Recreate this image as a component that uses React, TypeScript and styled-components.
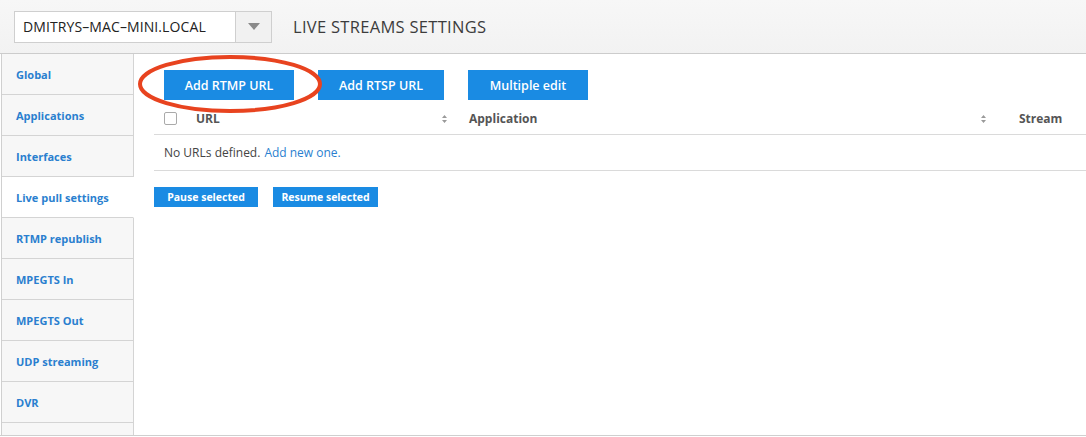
import styled, { createGlobalStyle } from 'styled-components';

const GlobalStyle = createGlobalStyle`
  body {
    margin: 0;
    background: #ffffff;
    font-family: "Open Sans", "DejaVu Sans", sans-serif;
  }
`;

const Page = styled.div`
  width: 1086px;
  height: 435px;
  border-bottom: 1px solid #cfcfcf;
  overflow: hidden;
`;

const Header = styled.div`
  height: 53px;
  display: flex;
  align-items: center;
  padding-left: 14px;
  background: linear-gradient(#f7f7f7, #f2f2f2);
  border-bottom: 1px solid #cccccc;
`;

const Select = styled.div`
  display: flex;
  width: 258px;
  height: 32px;
  box-sizing: border-box;
  border: 1px solid #cfcfcf;
  background: #ffffff;
`;

const SelectValue = styled.div`
  flex: 1;
  display: flex;
  align-items: center;
  padding-left: 8px;
  font-size: 14px;
  color: #222;
  letter-spacing: 0.1px;
`;

const SelectArrow = styled.div`
  width: 35px;
  border-left: 1px solid #cfcfcf;
  background: #f1f1f1;
  display: flex;
  align-items: center;
  justify-content: center;
`;

const Title = styled.div`
  margin-left: 21px;
  font-size: 16.5px;
  color: #3c3c3c;
  letter-spacing: 0.3px;
`;

const Body = styled.div`
  display: flex;
  height: 381px;
`;

const Sidebar = styled.div`
  width: 132px;
  margin-left: 1px;
  border-left: 1px solid #d0d0d0;
  display: flex;
  flex-direction: column;
`;

const NavItem = styled.div<{ $active?: boolean }>`
  height: 40px;
  flex-shrink: 0;
  display: flex;
  align-items: center;
  padding-left: 14px;
  font-size: 11px;
  font-weight: 700;
  color: #2a7fcf;
  background: ${(p) => (p.$active ? '#ffffff' : '#f7f7f7')};
  border-bottom: 1px solid #d4d4d4;
  border-right: 1px solid ${(p) => (p.$active ? 'transparent' : '#d4d4d4')};
`;

const Main = styled.div`
  flex: 1;
  padding: 16px 0 0 20px;
`;

const Toolbar = styled.div`
  display: flex;
  gap: 24px;
  padding-left: 10px;
`;

const ButtonWrap = styled.div`
  position: relative;
`;

const Button = styled.div<{ $w: number }>`
  width: ${(p) => p.$w}px;
  height: 30px;
  background: #1a8be3;
  color: #fff;
  font-size: 12.5px;
  font-weight: 600;
  display: flex;
  align-items: center;
  justify-content: center;
`;

const Ring = styled.svg`
  position: absolute;
  left: -28px;
  top: -17px;
  pointer-events: none;
`;

const Table = styled.div`
  margin-top: 3px;
`;

const HeadRow = styled.div`
  display: grid;
  grid-template-columns: 42px 273px 550px 1fr;
  height: 31px;
  align-items: center;
  border-bottom: 1px solid #dadada;
  font-size: 12px;
  font-weight: 700;
  color: #555;
`;

const HeadCell = styled.div<{ $pr?: number }>`
  display: flex;
  justify-content: space-between;
  align-items: center;
  padding-right: ${(p) => p.$pr ?? 0}px;
`;

const Checkbox = styled.div`
  width: 11px;
  height: 11px;
  margin-left: 10px;
  border: 1px solid #aaa;
  border-radius: 2px;
  background: #fff;
`;

const EmptyRow = styled.div`
  height: 35px;
  display: flex;
  align-items: center;
  padding-left: 10px;
  border-bottom: 1px solid #dadada;
  font-size: 12px;
  color: #444;
`;

const Link = styled.span`
  color: #2a7fcf;
  margin-left: 4px;
`;

const Actions = styled.div`
  display: flex;
  gap: 15px;
  margin-top: 16px;
`;

const SmallButton = styled.div<{ $w: number }>`
  width: ${(p) => p.$w}px;
  height: 20px;
  background: #1a8be3;
  color: #fff;
  font-size: 10.5px;
  font-weight: 700;
  display: flex;
  align-items: center;
  justify-content: center;
`;

const SortIcon = () => (
  <svg width="5" height="8" viewBox="0 0 5 8">
    <path d="M0 3 L2.5 0 L5 3 Z M0 5 L2.5 8 L5 5 Z" fill="#9a9a9a" />
  </svg>
);

const nav = [
  'Global',
  'Applications',
  'Interfaces',
  'Live pull settings',
  'RTMP republish',
  'MPEGTS In',
  'MPEGTS Out',
  'UDP streaming',
  'DVR',
  '',
];

const App = () => {
  return (
    <>
      <GlobalStyle />
      <Page>
        <Header>
          <Select>
            <SelectValue>DMITRYS–MAC–MINI.LOCAL</SelectValue>
            <SelectArrow>
              <svg width="12" height="7" viewBox="0 0 12 7">
                <path d="M0 0 L12 0 L6 7 Z" fill="#8a8a8a" />
              </svg>
            </SelectArrow>
          </Select>
          <Title>LIVE STREAMS SETTINGS</Title>
        </Header>
        <Body>
          <Sidebar>
            {nav.map((n, i) => (
              <NavItem key={i} $active={n === 'Live pull settings'}>
                {n}
              </NavItem>
            ))}
          </Sidebar>
          <Main>
            <Toolbar>
              <ButtonWrap>
                <Button $w={130}>Add RTMP URL</Button>
                <Ring width="188" height="62" viewBox="0 0 188 62">
                  <ellipse cx="94" cy="31" rx="90" ry="27" fill="none" stroke="#e8431f" strokeWidth="4" />
                </Ring>
              </ButtonWrap>
              <Button $w={126}>Add RTSP URL</Button>
              <Button $w={120}>Multiple edit</Button>
            </Toolbar>
            <Table>
              <HeadRow>
                <Checkbox />
                <HeadCell $pr={22}>
                  <span>URL</span>
                  <SortIcon />
                </HeadCell>
                <HeadCell $pr={33}>
                  <span>Application</span>
                  <SortIcon />
                </HeadCell>
                <HeadCell>
                  <span>Stream</span>
                </HeadCell>
              </HeadRow>
              <EmptyRow>
                No URLs defined.<Link>Add new one.</Link>
              </EmptyRow>
            </Table>
            <Actions>
              <SmallButton $w={104}>Pause selected</SmallButton>
              <SmallButton $w={105}>Resume selected</SmallButton>
            </Actions>
          </Main>
        </Body>
      </Page>
    </>
  );
};

export default App;
